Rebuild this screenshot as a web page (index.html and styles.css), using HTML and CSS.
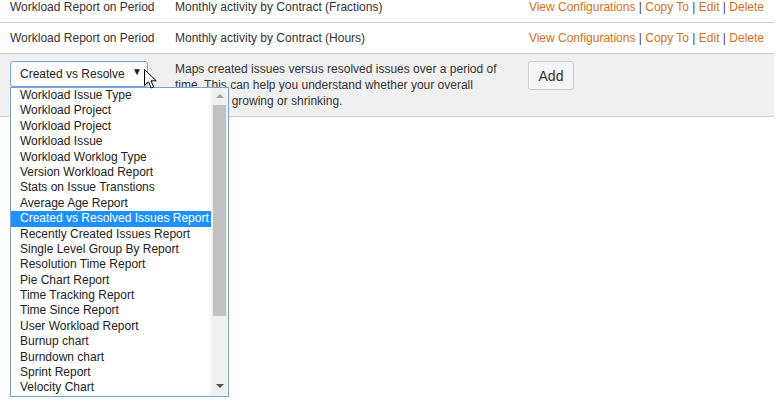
FILE: index.html
```html
<!DOCTYPE html>
<html>
<head>
<meta charset="utf-8">
<link rel="stylesheet" href="styles.css">
</head>
<body>
<div class="page">
<div class="reports">
  <div class="row first">
    <div class="cell c1">Workload Report on Period</div>
    <div class="cell c2">Monthly activity by Contract (Fractions)</div>
    <div class="cell c3 links"><a>View Configurations</a> | <a>Copy To</a> | <a>Edit</a> | <a>Delete</a></div>
  </div>
  <div class="row">
    <div class="cell c1">Workload Report on Period</div>
    <div class="cell c2">Monthly activity by Contract (Hours)</div>
    <div class="cell c3 links"><a>View Configurations</a> | <a>Copy To</a> | <a>Edit</a> | <a>Delete</a></div>
  </div>
  <div class="row add-row">
    <div class="cell c1">
      <div class="select-wrap">
        <div class="select"><span class="select-text">Created vs Resolve</span><span class="select-arrow">▼</span></div>
        <div class="dropdown">
          <ul class="options">
            <li>Workload Issue Type</li>
            <li>Workload Project</li>
            <li>Workload Project</li>
            <li>Workload Issue</li>
            <li>Workload Worklog Type</li>
            <li>Version Workload Report</li>
            <li>Stats on Issue Transtions</li>
            <li>Average Age Report</li>
            <li class="selected">Created vs Resolved Issues Report</li>
            <li>Recently Created Issues Report</li>
            <li>Single Level Group By Report</li>
            <li>Resolution Time Report</li>
            <li>Pie Chart Report</li>
            <li>Time Tracking Report</li>
            <li>Time Since Report</li>
            <li>User Workload Report</li>
            <li>Burnup chart</li>
            <li>Burndown chart</li>
            <li>Sprint Report</li>
            <li>Velocity Chart</li>
          </ul>
          <div class="scrollbar">
            <span class="arrow-up"></span>
            <span class="thumb"></span>
            <span class="arrow-down"></span>
          </div>
        </div>
        <svg class="cursor" width="13" height="20" viewBox="0 0 13 20">
          <path d="M0.5 0.5 L0.5 16.5 L4.5 12.8 L7.2 19 L9.6 18 L7 11.8 L12.2 11.8 Z" fill="#fff" stroke="#000" stroke-width="1" stroke-linejoin="miter"/>
        </svg>
      </div>
    </div>
    <div class="cell c2 desc">Maps created issues versus resolved issues over a period of time. This can help you understand whether your overall backlog is growing or shrinking.</div>
    <div class="cell c3"><button class="add-btn">Add</button></div>
  </div>
</div>
</div>
</body>
</html>
```

FILE: styles.css
```css
html, body {
  margin: 0;
  padding: 0;
  background: #fff;
}
body {
  font-family: "Liberation Sans", Arial, sans-serif;
  font-size: 12px;
  color: #333;
}
.page {
  min-height: 406px;
}
.reports {
  width: 774px;
}
.row {
  display: grid;
  grid-template-columns: 165px 353px 256px;
  border-bottom: 1px solid #cfcfcf;
}
.row.first {
  margin-top: -8px;
}
.cell {
  padding: 7px 10px;
  line-height: 16px;
}
.links {
  text-align: right;
  color: #444;
}
.links a {
  color: #d4711c;
  text-decoration: none;
}
.add-row {
  background: #f0f0f0;
}
.desc {
  color: #333;
}
.select-wrap {
  position: relative;
  width: 138px;
}
.select {
  box-sizing: border-box;
  height: 26px;
  width: 138px;
  border: 1px solid #7ba4dc;
  border-radius: 3px;
  background: #fff;
  display: flex;
  align-items: center;
  justify-content: space-between;
  padding: 0 5px 0 9px;
  color: #222;
}
.select-arrow {
  font-size: 10px;
  color: #222;
  margin-top: -4px;
}
.dropdown {
  position: absolute;
  top: 26px;
  left: 0;
  width: 219px;
  height: 310px;
  box-sizing: border-box;
  border: 1px solid #7a9fd6;
  background: #fff;
  display: flex;
  z-index: 2;
}
.options {
  list-style: none;
  margin: 0;
  padding: 0;
  flex: 1;
  overflow: hidden;
}
.options li {
  height: 15.4px;
  line-height: 15.4px;
  padding-left: 9px;
  color: #222;
  white-space: nowrap;
}
.options li.selected {
  background: #1e90ff;
  color: #fff;
}
.scrollbar {
  width: 17px;
  background: #f0f0f0;
  display: flex;
  flex-direction: column;
  align-items: center;
}
.arrow-up {
  width: 0;
  height: 0;
  border-left: 4px solid transparent;
  border-right: 4px solid transparent;
  border-bottom: 4px solid #a3a3a3;
  margin-top: 6px;
}
.thumb {
  width: 13px;
  height: 211px;
  background: #c1c1c1;
  margin-top: 7px;
}
.arrow-down {
  width: 0;
  height: 0;
  border-left: 4px solid transparent;
  border-right: 4px solid transparent;
  border-top: 4px solid #505050;
  margin-top: auto;
  margin-bottom: 8px;
}
.cursor {
  position: absolute;
  left: 134px;
  top: 8px;
  z-index: 3;
}
.add-btn {
  font-family: "Liberation Sans", Arial, sans-serif;
  font-size: 14px;
  color: #333;
  background: #f5f5f5;
  border: 1px solid #cccccc;
  border-radius: 3px;
  width: 46px;
  height: 29px;
  padding: 0;
}
```
